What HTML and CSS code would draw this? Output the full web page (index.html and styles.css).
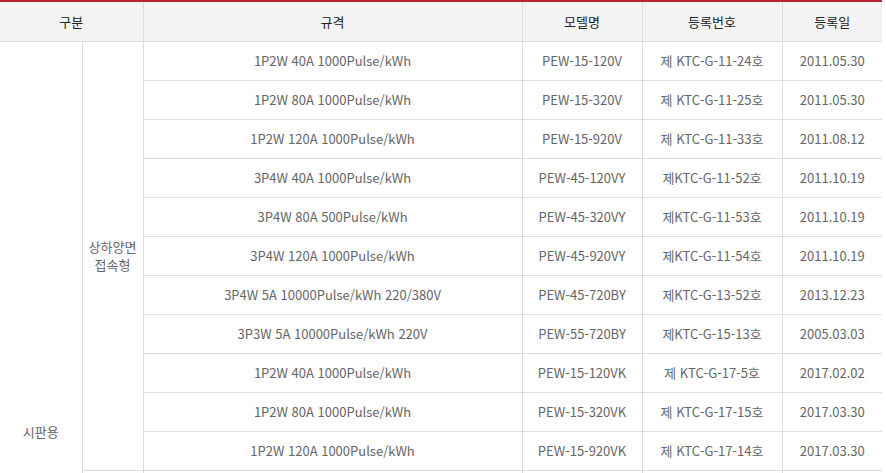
FILE: index.html
```html
<!DOCTYPE html>
<html lang="ko">
<head>
  <meta charset="UTF-8">
  <meta name="viewport" content="width=device-width, initial-scale=1.0">
  <title>검정 현황</title>
  <link rel="stylesheet" href="styles.css">
</head>
<body>
  <div class="tbl-wrap">
    <table class="cert-table">
      <colgroup>
        <col class="c-type">
        <col class="c-sub">
        <col class="c-spec">
        <col class="c-model">
        <col class="c-reg">
        <col class="c-date">
      </colgroup>
      <thead>
        <tr>
          <th colspan="2">구분</th>
          <th>규격</th>
          <th>모델명</th>
          <th>등록번호</th>
          <th>등록일</th>
        </tr>
      </thead>
      <tbody>
        <tr>
          <td rowspan="20">시판용</td>
          <td rowspan="11">상하양면<br>접속형</td>
          <td>1P2W 40A 1000Pulse/kWh</td>
          <td>PEW-15-120V</td>
          <td>제 KTC-G-11-24호</td>
          <td>2011.05.30</td>
        </tr>
        <tr>
          <td>1P2W 80A 1000Pulse/kWh</td>
          <td>PEW-15-320V</td>
          <td>제 KTC-G-11-25호</td>
          <td>2011.05.30</td>
        </tr>
        <tr>
          <td>1P2W 120A 1000Pulse/kWh</td>
          <td>PEW-15-920V</td>
          <td>제 KTC-G-11-33호</td>
          <td>2011.08.12</td>
        </tr>
        <tr>
          <td>3P4W 40A 1000Pulse/kWh</td>
          <td>PEW-45-120VY</td>
          <td>제KTC-G-11-52호</td>
          <td>2011.10.19</td>
        </tr>
        <tr>
          <td>3P4W 80A 500Pulse/kWh</td>
          <td>PEW-45-320VY</td>
          <td>제KTC-G-11-53호</td>
          <td>2011.10.19</td>
        </tr>
        <tr>
          <td>3P4W 120A 1000Pulse/kWh</td>
          <td>PEW-45-920VY</td>
          <td>제KTC-G-11-54호</td>
          <td>2011.10.19</td>
        </tr>
        <tr>
          <td>3P4W 5A 10000Pulse/kWh 220/380V</td>
          <td>PEW-45-720BY</td>
          <td>제KTC-G-13-52호</td>
          <td>2013.12.23</td>
        </tr>
        <tr>
          <td>3P3W 5A 10000Pulse/kWh 220V</td>
          <td>PEW-55-720BY</td>
          <td>제KTC-G-15-13호</td>
          <td>2005.03.03</td>
        </tr>
        <tr>
          <td>1P2W 40A 1000Pulse/kWh</td>
          <td>PEW-15-120VK</td>
          <td>제 KTC-G-17-5호</td>
          <td>2017.02.02</td>
        </tr>
        <tr>
          <td>1P2W 80A 1000Pulse/kWh</td>
          <td>PEW-15-320VK</td>
          <td>제 KTC-G-17-15호</td>
          <td>2017.03.30</td>
        </tr>
        <tr>
          <td>1P2W 120A 1000Pulse/kWh</td>
          <td>PEW-15-920VK</td>
          <td>제 KTC-G-17-14호</td>
          <td>2017.03.30</td>
        </tr>
        <!-- 다음 구분: 화면 아래로 이어짐 -->
        <tr>
          <td rowspan="9"></td>
          <td></td><td></td><td></td><td></td>
        </tr>
        <tr><td></td><td></td><td></td><td></td></tr>
        <tr><td></td><td></td><td></td><td></td></tr>
        <tr><td></td><td></td><td></td><td></td></tr>
        <tr><td></td><td></td><td></td><td></td></tr>
        <tr><td></td><td></td><td></td><td></td></tr>
        <tr><td></td><td></td><td></td><td></td></tr>
        <tr><td></td><td></td><td></td><td></td></tr>
        <tr><td></td><td></td><td></td><td></td></tr>
      </tbody>
    </table>
  </div>
</body>
</html>
```

FILE: styles.css
```css
body {
  margin: 0;
  background-color: #fff;
  font-family: "Noto Sans CJK KR", "Noto Sans", sans-serif;
}
.tbl-wrap {
  width: 882px;
  border-top: 2px solid #b8242a;
}
.cert-table {
  width: 100%;
  border-collapse: collapse;
  border-style: hidden;
  table-layout: fixed;
  font-size: 13px;
}
.c-type { width: 82px; }
.c-sub { width: 61px; }
.c-spec { width: 379px; }
.c-model { width: 120px; }
.c-reg { width: 140px; }
.c-date { width: 100px; }

.cert-table th,
.cert-table td {
  border: 1px solid #dddddd;
  text-align: center;
  vertical-align: middle;
  padding: 0;
  line-height: 18px;
}
.cert-table th {
  height: 39px;
  background-color: #f3f3f3;
  color: #222;
  font-weight: normal;
  font-size: 13px;
}
.cert-table td {
  height: 38px;
  color: #666;
}
```
